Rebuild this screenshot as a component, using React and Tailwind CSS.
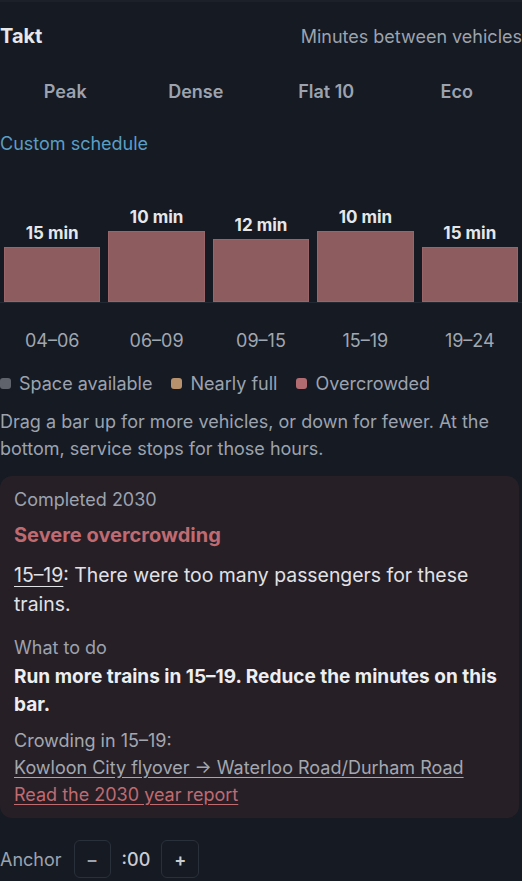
const presets = ['Peak', 'Dense', 'Flat 10', 'Eco']

const bars = [
    { hours: '04–06', label: '15 min', h: 'h-[55px]' },
    { hours: '06–09', label: '10 min', h: 'h-[71px]' },
    { hours: '09–15', label: '12 min', h: 'h-[63px]' },
    { hours: '15–19', label: '10 min', h: 'h-[71px]' },
    { hours: '19–24', label: '15 min', h: 'h-[55px]' },
]

const legend = [
    { name: 'Space available', dot: 'bg-[#5f646c]' },
    { name: 'Nearly full', dot: 'bg-[#b8916d]' },
    { name: 'Overcrowded', dot: 'bg-[#b26b70]' },
]

export default function App() {
    return (
        <div
            className="min-h-screen w-[522px] overflow-hidden bg-[#151a23] border-t-2 border-[#1b2029] text-[18px] leading-[27px] text-[#9ca3af]"
            style={{ fontFamily: 'Inter, "Noto Sans", sans-serif' }}
        >
            {/* Header */}
            <div className="flex items-center justify-between pt-[20px]">
                <h2 className="text-[20px] leading-7 font-bold text-[#e5e7eb]">Takt</h2>
                <span className="whitespace-nowrap">Minutes between vehicles</span>
            </div>

            {/* Presets */}
            <div className="grid grid-cols-4 mt-[21px]">
                {presets.map(p => (
                    <button key={p} className="h-10 font-semibold text-[#9ca3af]">
                        {p}
                    </button>
                ))}
            </div>

            <div className="mt-[19px] text-[#5b9ec3]">Custom schedule</div>

            {/* Chart */}
            <div className="mt-5 h-[126px] grid grid-cols-5 items-end border-b border-[#232933]">
                {bars.map((b, i) => (
                    <div key={i} className="flex flex-col items-center justify-end px-1">
                        <span className="text-[17px] leading-6 font-bold text-[#e5e7eb]">{b.label}</span>
                        <div className={`w-full mt-0.5 bg-[#8d5c5f] border border-[#9a6568] ${b.h}`} />
                    </div>
                ))}
            </div>
            <div className="grid grid-cols-5 mt-[24px]">
                {bars.map((b, i) => (
                    <span key={i} className="text-center text-[#a1a7b0]">{b.hours}</span>
                ))}
            </div>

            {/* Legend */}
            <div className="flex items-center gap-[19px] mt-4">
                {legend.map(l => (
                    <div key={l.name} className="flex items-center gap-2">
                        <span className={`w-[11px] h-[11px] rounded-[3px] ${l.dot}`} />
                        <span>{l.name}</span>
                    </div>
                ))}
            </div>

            <p className="mt-[11px] pr-6">
                Drag a bar up for more vehicles, or down for fewer. At the bottom, service stops for those hours.
            </p>

            {/* Status card */}
            <div className="mt-[14px] mr-[3px] rounded-xl bg-[#261f26] px-[14px] pt-[10px] pb-[10px]">
                <p className="text-[#9ca3af]">Completed 2030</p>
                <h3 className="mt-2 text-[20px] leading-7 font-bold text-[#c06a71]">Severe overcrowding</h3>
                <p className="mt-3 text-[19.4px] leading-[29px] text-[#e1e2e6]">
                    <span className="underline underline-offset-4">15–19</span>: There were too many passengers for these trains.
                </p>
                <p className="mt-[15px] text-[#9ca3af]">What to do</p>
                <p className="mt-[2px] text-[19px] leading-7 font-bold text-[#eceef1]">
                    Run more trains in 15–19. Reduce the minutes on this bar.
                </p>
                <div className="mt-2">
                    <p className="text-[#a3a7b0]">Crowding in 15–19:</p>
                    <a className="block text-[#a3a7b0] underline underline-offset-[3px]">
                        Kowloon City flyover → Waterloo Road/Durham Road
                    </a>
                    <a className="block text-[#c06a71] underline underline-offset-[3px]">Read the 2030 year report</a>
                </div>
            </div>

            {/* Anchor */}
            <div className="flex items-center gap-[11px] mt-[22px]">
                <span className="mr-[1px]">Anchor</span>
                <button className="w-[37px] h-[38px] rounded-md border border-[#2a303a] text-[#9ca3af] font-semibold flex items-center justify-center">
                    −
                </button>
                <span className="text-[#c9cdd3] font-medium">:00</span>
                <button className="w-[38px] h-[38px] rounded-md border border-[#2a303a] text-[#c9cdd3] font-semibold flex items-center justify-center">
                    +
                </button>
            </div>
        </div>
    )
}
